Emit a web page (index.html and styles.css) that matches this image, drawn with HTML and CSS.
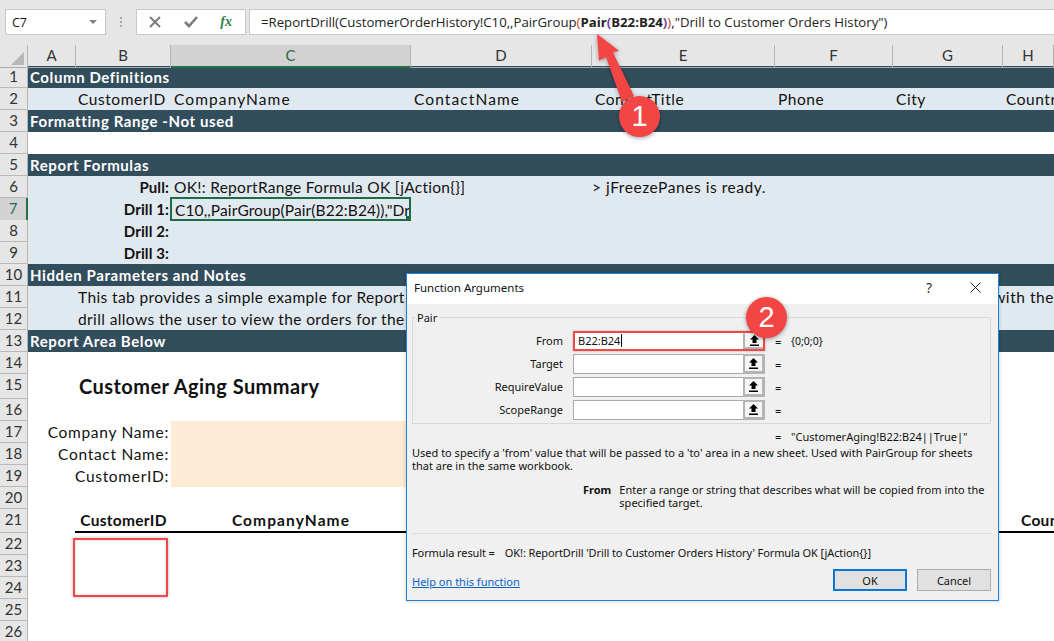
FILE: index.html
```html
<!DOCTYPE html>
<html lang="en">
<head>
  <meta charset="UTF-8" />
  <title>Function Arguments</title>
  <link rel="stylesheet" href="styles.css">
</head>
<body>

  <div class="formula-bar">
    <div class="name-box"><span>C7</span><i class="caret"></i></div>
    <div class="dots"><i></i><i></i><i></i></div>
    <div class="fx-box">
      <svg width="14" height="14" viewBox="0 0 14 14"><path d="M2 2 L12 12 M12 2 L2 12" stroke="#7b7b7b" stroke-width="2" fill="none"/></svg>
      <svg width="16" height="14" viewBox="0 0 16 14"><path d="M2 7 L6 11 L14 2" stroke="#7b7b7b" stroke-width="2.6" fill="none"/></svg>
      <span class="fx">fx</span>
    </div>
    <div class="formula">=ReportDrill(CustomerOrderHistory!C10,,PairGroup<span class="p1">(</span><b>Pair<span class="p2">(</span>B22:B24<span class="p2">)</span></b><span class="p1">)</span>,"Drill to Customer Orders History")</div>
  </div>

  <div class="row col-head">
    <div class="corner"><i></i></div>
    <div>A</div><div>B</div><div class="on">C</div><div>D</div><div>E</div><div>F</div><div>G</div><div>H</div>
  </div>

  <div class="row dark"><div class="rh">1</div><div class="title">Column Definitions</div></div>
  <div class="row light">
    <div class="rh">2</div>
    <div class="cell b">CustomerID</div><div class="cell c wide">CompanyName</div><div class="cell d wide">ContactName</div>
    <div class="cell e">ContactTitle</div><div class="cell f">Phone</div><div class="cell g">City</div><div class="cell h">Country</div>
  </div>
  <div class="row dark"><div class="rh">3</div><div class="title">Formatting Range -Not used</div></div>
  <div class="row"><div class="rh">4</div></div>
  <div class="row dark"><div class="rh">5</div><div class="title">Report Formulas</div></div>
  <div class="row light">
    <div class="rh">6</div><div class="label strong">Pull:</div>
    <div class="cell c tight">OK!: ReportRange Formula OK [jAction{}]</div><div class="cell e flush">&gt; jFreezePanes is ready.</div>
  </div>
  <div class="row light">
    <div class="rh on">7</div><div class="label strong">Drill 1:</div>
    <div class="cell c selected">C10,,PairGroup(Pair(B22:B24)),"Dr<i class="handle"></i></div>
  </div>
  <div class="row light"><div class="rh">8</div><div class="label strong">Drill 2:</div></div>
  <div class="row light"><div class="rh">9</div><div class="label strong">Drill 3:</div></div>
  <div class="row dark"><div class="rh">10</div><div class="title">Hidden Parameters and Notes</div></div>
  <div class="row light">
    <div class="rh">11</div><div class="cell b note">This tab provides a simple example for Report</div><div class="cell g-right">with the</div>
  </div>
  <div class="row light"><div class="rh">12</div><div class="cell b note">drill allows the user to view the orders for the</div></div>
  <div class="row dark"><div class="rh">13</div><div class="title">Report Area Below</div></div>
  <div class="row"><div class="rh">14</div></div>
  <div class="row tall"><div class="rh">15</div><div class="cell b report-title">Customer Aging Summary</div></div>
  <div class="row"><div class="rh">16</div></div>
  <div class="row"><div class="rh">17</div><div class="label">Company Name:</div><div class="peach"></div></div>
  <div class="row"><div class="rh">18</div><div class="label">Contact Name:</div><div class="peach"></div></div>
  <div class="row"><div class="rh">19</div><div class="label">CustomerID:</div><div class="peach"></div></div>
  <div class="row"><div class="rh">20</div></div>
  <div class="row head-row">
    <div class="rh">21</div><div class="head-line"></div>
    <div class="cell b strong center">CustomerID</div><div class="cell c strong center wide">CompanyName</div><div class="cell h-head strong">Country</div>
  </div>
  <div class="row"><div class="rh">22</div></div>
  <div class="row"><div class="rh">23</div></div>
  <div class="row"><div class="rh">24</div></div>
  <div class="row"><div class="rh">25</div></div>
  <div class="row"><div class="rh">26</div></div>

  <!-- dialog on top of the sheet -->
  <div class="dialog">
    <div class="dlg-title">
      <span>Function Arguments</span>
      <span class="dlg-btns">
        <span class="help-q">?</span>
        <svg width="11" height="11" viewBox="0 0 11 11"><path d="M0.5 0.5 L10.5 10.5 M10.5 0.5 L0.5 10.5" stroke="#222" stroke-width="1" fill="none"/></svg>
      </span>
    </div>
    <div class="dlg-body">
      <fieldset class="args">
        <legend>Pair</legend>
        <div class="arg">
          <label>From</label>
          <div class="input hot"><span class="val">B22:B24<i class="cursor"></i></span><span class="pick"><svg width="9" height="11" viewBox="0 0 9 11"><path d="M4.5 0 L9 4.5 H6.5 V8 H2.5 V4.5 H0 Z M0 9.5 H9 V11 H0 Z" fill="#000"/></svg></span></div>
          <span class="eq">=</span><span class="res">{0;0;0}</span>
        </div>
        <div class="arg">
          <label>Target</label>
          <div class="input"><span class="val"></span><span class="pick"><svg width="9" height="11" viewBox="0 0 9 11"><path d="M4.5 0 L9 4.5 H6.5 V8 H2.5 V4.5 H0 Z M0 9.5 H9 V11 H0 Z" fill="#000"/></svg></span></div>
          <span class="eq">=</span>
        </div>
        <div class="arg">
          <label>RequireValue</label>
          <div class="input"><span class="val"></span><span class="pick"><svg width="9" height="11" viewBox="0 0 9 11"><path d="M4.5 0 L9 4.5 H6.5 V8 H2.5 V4.5 H0 Z M0 9.5 H9 V11 H0 Z" fill="#000"/></svg></span></div>
          <span class="eq">=</span>
        </div>
        <div class="arg">
          <label>ScopeRange</label>
          <div class="input"><span class="val"></span><span class="pick"><svg width="9" height="11" viewBox="0 0 9 11"><path d="M4.5 0 L9 4.5 H6.5 V8 H2.5 V4.5 H0 Z M0 9.5 H9 V11 H0 Z" fill="#000"/></svg></span></div>
          <span class="eq">=</span>
        </div>
      </fieldset>
      <div class="total"><span class="eq">=</span><span>"CustomerAging!B22:B24||True|"</span></div>
      <p class="desc">Used to specify a 'from' value that will be passed to a 'to' area in a new sheet. Used with PairGroup for sheets that are in the same workbook.</p>
      <div class="arg-help">
        <b>From</b>
        <span>Enter a range or string that describes what will be copied from into the specified target.</span>
      </div>
      <div class="sep"></div>
      <div class="result"><span>Formula result =</span><span>OK!: ReportDrill 'Drill to Customer Orders History' Formula OK [jAction{}]</span></div>
      <div class="dlg-foot">
        <a class="help-link" href="#">Help on this function</a>
        <div class="btns"><button class="ok">OK</button><button>Cancel</button></div>
      </div>
    </div>
  </div>

  <!-- callouts -->
  <div class="red-box"></div>
  <svg class="arrow" width="70" height="90" viewBox="0 0 70 90">
    <path d="M7 4 L29 20.7 L23 22.5 L44 66 L32 72 L16 27 L9 30.7 Z" fill="#f44545"/>
  </svg>
  <div class="badge one">1</div>
  <div class="badge two">2</div>

</body>
</html>
```

FILE: styles.css
```css
body {
  margin: 0;
  width: 1054px;
  height: 641px;
  overflow: hidden;
  position: relative;
  background: #fff;
  font-family: 'Lato', sans-serif;
  color: #111;
}

/* formula bar */
.formula-bar {
  display: flex;
  align-items: stretch;
  height: 45px;
  padding: 9px 0 10px 5px;
  box-sizing: border-box;
  background: #e6e6e6;
  font-family: 'Open Sans', sans-serif;
  font-size: 13.2px;
}

.name-box {
  width: 101px;
  box-sizing: border-box;
  display: flex;
  align-items: center;
  justify-content: space-between;
  padding: 0 8px 0 6px;
  background: #fff;
  border: 1px solid #c8c8c8;
  font-size: 12.5px;
}

.caret {
  border: 4px solid transparent;
  border-top: 4px solid #808080;
  margin-top: 4px;
}

.dots {
  width: 30px;
  display: flex;
  flex-direction: column;
  align-items: center;
  justify-content: center;
  gap: 2px;
}

.dots i {
  width: 2px;
  height: 2px;
  background: #a8a8a8;
}

.fx-box {
  width: 110px;
  box-sizing: border-box;
  display: flex;
  align-items: center;
  justify-content: space-between;
  padding: 0 13px 0 11px;
  background: #fff;
  border: 1px solid #c8c8c8;
}

.fx {
  font-family: 'Liberation Serif', serif;
  font-style: italic;
  font-weight: bold;
  font-size: 14px;
  color: #2f7d4f;
}

.formula {
  flex: 1;
  margin-left: 3px;
  padding-left: 11px;
  line-height: 24px;
  background: #fff;
  border: 1px solid #c8c8c8;
  border-right: none;
  white-space: nowrap;
  color: #222;
}

.p1 { color: #c0392b; }
.p2 { color: #7a3fa0; }

/* sheet rows */
.row {
  display: grid;
  grid-template-columns: 28px 48px 95px 240px 181px 183px 118px 110px 51px;
  height: 22px;
  line-height: 22px;
  font-size: 15.5px;
  letter-spacing: 0.55px;
  white-space: nowrap;
}

.row.tall { height: 25px; line-height: 25px; }
.row.head-row { height: 24px; position: relative; }

.col-head {
  height: 21px;
  line-height: 21px;
  background: #e6e6e6;
  text-align: center;
  color: #333;
  letter-spacing: 0;
  font-size: 15px;
}

.col-head div {
  box-sizing: border-box;
  border-right: 1px solid #b5b5b5;
  border-bottom: 1px solid #aaa;
}

.col-head .on {
  background: #d2d2d2;
  color: #1f6b45;
  border-bottom: 2px solid #217346;
}

.corner { position: relative; }

.corner i {
  position: absolute;
  right: 3px;
  bottom: 2px;
  border-style: solid;
  border-width: 0 0 13px 13px;
  border-color: transparent transparent #b8b8b8 transparent;
}

.rh {
  grid-column: 1;
  grid-row: 1;
  box-sizing: border-box;
  background: #e6e6e6;
  border-right: 1px solid #b5b5b5;
  border-bottom: 1px solid #b9b9b9;
  text-align: center;
  color: #333;
  font-size: 15px;
  font-weight: 400;
  letter-spacing: 0;
  line-height: 21px;
}

.rh.on {
  background: #d2d2d2;
  color: #1f6b45;
  border-right: 2px solid #217346;
}

.dark { background: #324d5c; color: #fff; }
.light { background: #e1e9f0; }

.title {
  grid-column: 2 / -1;
  grid-row: 1;
  padding-left: 2px;
  font-weight: 700;
  font-size: 15px;
  letter-spacing: 0.6px;
}

.cell {
  grid-row: 1;
  padding-left: 3px;
  min-width: 0;
}

.b { grid-column: 3; padding-left: 2px; }
.c { grid-column: 4; }
.d { grid-column: 5; }
.e { grid-column: 6; }
.f { grid-column: 7; }
.g { grid-column: 8; }
.h { grid-column: 9; }

.wide { letter-spacing: 1.1px; }
.tight { letter-spacing: 0.29px; }
.flush { padding-left: 0; }
.note { letter-spacing: 0.39px; }

.g-right { grid-column: 8 / -1; text-align: right; padding-right: 0; }
.h-head { grid-column: 9; padding-left: 18px; }

.label {
  grid-column: 2 / 4;
  grid-row: 1;
  text-align: right;
  padding-right: 2px;
  letter-spacing: 0.7px;
}

.strong { font-weight: 700; letter-spacing: 0.3px; }
.label.strong { font-size: 15px; letter-spacing: 0.1px; }
.center { text-align: center; padding-left: 0; }
.center.wide { letter-spacing: 1.1px; }

.selected {
  position: relative;
  box-sizing: border-box;
  margin-left: -1px;
  padding-left: 3px;
  height: 24px;
  margin-top: -1px;
  line-height: 22px;
  border: 2px solid #1f6b45;
  overflow: hidden;
  letter-spacing: 0.1px;
}

.handle {
  position: absolute;
  right: -2px;
  bottom: -2px;
  width: 5px;
  height: 5px;
  background: #1f6b45;
}

.report-title {
  font-size: 20px;
  font-weight: 700;
  letter-spacing: 0.45px;
  padding-left: 3px;
}

.peach { grid-column: 4 / 6; grid-row: 1; background: #fdebd5; }

.head-line {
  grid-column: 3 / -1;
  grid-row: 1;
  align-self: end;
  height: 2px;
  background: #000;
  margin-left: -1px;
}

/* dialog */
.dialog {
  position: absolute;
  left: 406px;
  top: 273px;
  width: 593px;
  height: 328px;
  box-sizing: border-box;
  border: 1px solid #1a82d6;
  background: #f0f0f0;
  font-family: 'Noto Sans', sans-serif;
  font-size: 11px;
  line-height: 13px;
  color: #111;
  box-shadow: 0 0 4px rgba(0, 0, 0, 0.2);
}

.dlg-title {
  height: 30px;
  box-sizing: border-box;
  background: #fff;
  display: flex;
  align-items: center;
  justify-content: space-between;
  padding: 0 17px 3px 7px;
  font-size: 11.5px;
}

.dlg-btns {
  display: flex;
  align-items: center;
  gap: 38px;
}

.help-q { font-size: 14px; color: #333; }

.dlg-body {
  padding: 0 5px;
}

.args {
  margin: 8px 0 0;
  padding: 8px 0 0;
  width: 579px;
  height: 112px;
  box-sizing: border-box;
  border: 1px solid #d9d9d9;
  border-radius: 0;
}

.args legend {
  margin-left: 2px;
  padding: 0 2px;
  line-height: 11px;
}

.arg {
  display: flex;
  align-items: center;
  height: 20px;
  margin-bottom: 3px;
}

.arg label {
  width: 150px;
  text-align: right;
  margin: -2px 10px 0 0;
}

.input {
  width: 192px;
  height: 20px;
  box-sizing: border-box;
  display: flex;
  background: #fff;
  border: 1px solid #a9a9a9;
  border-right: none;
}

.input .val {
  flex: 1;
  padding-left: 4px;
  line-height: 18px;
}

.input.hot {
  border: 2px solid #f04848;
  box-shadow: 0 0 2px rgba(0, 0, 0, 0.3);
}

.input.hot .val { line-height: 16px; padding-left: 3px; }

.cursor {
  display: inline-block;
  width: 1px;
  height: 13px;
  margin-left: 1px;
  vertical-align: -2px;
  background: #000;
}

.pick {
  width: 22px;
  display: flex;
  align-items: center;
  justify-content: center;
  background: #f6f6f6;
  box-sizing: border-box;
  margin: -1px 0;
  border: solid #b4b4b4;
  border-width: 2px 3px 3px 2px;
}

.hot .pick {
  width: 20px;
  margin: 0;
  border-width: 0 0 2px 2px;
}

.eq { width: 16px; margin-left: 10px; }
.res { font-size: 10.5px; }

.total {
  display: flex;
  margin: 6px 0 0 363px;
}

.total .eq { margin-left: 0; }

.desc {
  margin: 3px 0 0;
  width: 575px;
}

.arg-help {
  display: flex;
  margin-top: 11px;
  gap: 8px;
  padding-left: 171px;
}

.arg-help span { width: 372px; }

.sep {
  height: 1px;
  background: #dcdcdc;
  margin: 24px 0 0;
  width: 580px;
}

.result {
  display: flex;
  gap: 10px;
  margin-top: 12px;
  letter-spacing: -0.1px;
}

.dlg-foot {
  display: flex;
  justify-content: space-between;
  margin-top: 10px;
  width: 579px;
}

.help-link { color: #0b63c5; margin-top: 6px; }

.btns { display: flex; gap: 10px; }

.btns button {
  width: 74px;
  height: 22px;
  padding: 0;
  box-sizing: border-box;
  background: #e1e1e1;
  border: 1px solid #adadad;
  font-family: 'Noto Sans', sans-serif;
  font-size: 11px;
  color: #111;
}

.btns .ok { border: 2px solid #0a78d2; }

/* callouts */
.red-box {
  position: absolute;
  left: 73px;
  top: 538px;
  width: 95px;
  height: 59px;
  box-sizing: border-box;
  border: 2px solid #f04848;
  box-shadow: 0 0 3px rgba(0, 0, 0, 0.3), inset 0 0 3px rgba(0, 0, 0, 0.2);
}

.arrow {
  position: absolute;
  left: 590px;
  top: 30px;
  filter: drop-shadow(0 1px 2px rgba(0, 0, 0, 0.35));
}

.badge {
  position: absolute;
  width: 41px;
  height: 41px;
  border-radius: 50%;
  background: #f44545;
  color: #fff;
  font-family: 'Liberation Sans', sans-serif;
  font-size: 29px;
  line-height: 41px;
  text-align: center;
  box-shadow: 0 1px 4px rgba(0, 0, 0, 0.4);
}

.one { left: 619px; top: 96px; }
.two { left: 746px; top: 297px; }
```
